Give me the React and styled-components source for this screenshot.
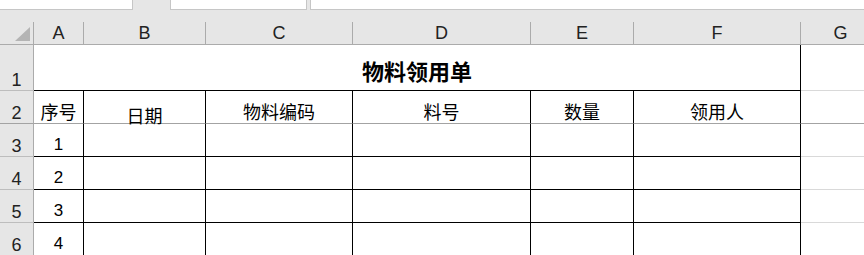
import React from "react";
import styled, { createGlobalStyle } from "styled-components";

const Global = createGlobalStyle`
  html, body { margin: 0; padding: 0; background: #ffffff; overflow: hidden; }
  #root { width: 864px; height: 255px; overflow: hidden; }
`;

const COLS = [
  { key: "A", w: 50 },
  { key: "B", w: 122 },
  { key: "C", w: 147 },
  { key: "D", w: 178 },
  { key: "E", w: 103 },
  { key: "F", w: 167 },
  { key: "G", w: 80 },
];
const ROW_H = [46, 33, 33, 33, 33, 33];

const BLACK = "#000000";
const GRID = "#d9d9d9";
const FREEZE = "#a3a3a3";
const HEAD_LINE = "#ababab";
const HEAD_BG = "#e6e6e6";

const Sheet = styled.div`
  display: flex;
  flex-direction: column;
  width: 864px;
  height: 255px;
  overflow: hidden;
  background: #ffffff;
`;

const FormulaBar = styled.div`
  display: flex;
  align-items: flex-start;
  height: 22px;
  background: ${HEAD_BG};
`;

const BarBox = styled.div`
  box-sizing: border-box;
  height: 10px;
  width: ${(p) => (p.$w ? `${p.$w}px` : "auto")};
  flex: ${(p) => (p.$grow ? 1 : "none")};
  margin-left: ${(p) => p.$gap || 0}px;
  background: #ffffff;
  border-bottom: 1px solid #c6c6c6;
  border-left: ${(p) => (p.$left ? "1px solid #c6c6c6" : "none")};
  border-right: ${(p) => (p.$right ? "1px solid #c6c6c6" : "none")};
`;

const Grid = styled.div`
  display: grid;
  grid-template-columns: 34px ${COLS.map((c) => `${c.w}px`).join(" ")};
  grid-template-rows: 23px ${ROW_H.map((h) => `${h}px`).join(" ")};
  width: 864px;
  overflow: hidden;
`;

const Corner = styled.div`
  position: relative;
  box-sizing: border-box;
  background: ${HEAD_BG};
  border-right: 1px solid ${HEAD_LINE};
  border-bottom: 1px solid ${HEAD_LINE};
`;

const CornerTriangle = styled.svg`
  position: absolute;
  left: 15px;
  top: 5px;
`;

const ColHead = styled.div`
  box-sizing: border-box;
  display: flex;
  align-items: flex-end;
  justify-content: center;
  padding-bottom: 1px;
  background: ${HEAD_BG};
  border-right: 1px solid ${HEAD_LINE};
  border-bottom: 1px solid ${HEAD_LINE};
  font-family: "Liberation Sans", Arial, sans-serif;
  font-size: 18px;
  line-height: 20px;
  color: #222222;
`;

const RowHead = styled.div`
  box-sizing: border-box;
  display: flex;
  align-items: flex-end;
  justify-content: center;
  padding-bottom: 0px;
  background: ${HEAD_BG};
  border-right: 1px solid ${HEAD_LINE};
  border-bottom: 1px solid ${(p) => p.$line};
  font-family: "Liberation Sans", Arial, sans-serif;
  font-size: 18px;
  line-height: 20px;
  color: #222222;
`;

const Cell = styled.div`
  box-sizing: border-box;
  display: flex;
  align-items: flex-end;
  justify-content: center;
  padding-bottom: ${(p) => p.$pad ?? 2}px;
  grid-column: ${(p) => (p.$span ? `span ${p.$span}` : "auto")};
  border-right: ${(p) => (p.$right ? `1px solid ${p.$right}` : "none")};
  border-bottom: 1px solid ${(p) => p.$bottom};
  font-family: ${(p) =>
    p.$num
      ? `"Liberation Sans", Arial, sans-serif`
      : `"Noto Sans CJK SC", "Noto Sans", sans-serif`};
  font-size: ${(p) => (p.$title ? 22 : p.$num ? 17 : 18)}px;
  font-weight: ${(p) => (p.$title ? 700 : 400)};
  line-height: ${(p) => p.$lh ?? (p.$title ? 28 : 20)}px;
  color: #000000;
  white-space: nowrap;
`;

const headers = [
  { text: "序号" },
  { text: "日期", pad: 0, lh: 16 },
  { text: "物料编码" },
  { text: "料号" },
  { text: "数量" },
  { text: "领用人" },
];

export default function App() {
  return (
    <>
      <Global />
      <Sheet>
        <FormulaBar>
          <BarBox $w={133} $right />
          <BarBox $w={137} $gap={37} $left $right />
          <BarBox $grow $gap={3} $left />
        </FormulaBar>
        <Grid>
          <Corner>
            <CornerTriangle width="16" height="15" viewBox="0 0 16 15">
              <polygon points="15,0 15,14 0,14" fill="#b4b4b4" />
            </CornerTriangle>
          </Corner>
          {COLS.map((c) => (
            <ColHead key={c.key}>{c.key}</ColHead>
          ))}

          {/* Row 1 */}
          <RowHead $line="#bdbdbd">1</RowHead>
          <Cell $span={6} $title $right={BLACK} $bottom={BLACK} $pad={6}>
            物料领用单
          </Cell>
          <Cell $bottom={GRID} />

          {/* Row 2 */}
          <RowHead $line={FREEZE}>2</RowHead>
          {headers.map((h) => (
            <Cell
              key={h.text}
              $right={BLACK}
              $bottom={FREEZE}
              $pad={h.pad ?? 2}
              $lh={h.lh}
            >
              {h.text}
            </Cell>
          ))}
          <Cell $bottom={FREEZE} />

          {/* Rows 3-6 */}
          {[1, 2, 3, 4].map((n) => (
            <React.Fragment key={n}>
              <RowHead $line="#bdbdbd">{n + 2}</RowHead>
              <Cell $num $right={BLACK} $bottom={BLACK} $pad={1}>
                {n}
              </Cell>
              {[0, 1, 2, 3, 4].map((i) => (
                <Cell key={i} $right={BLACK} $bottom={BLACK} />
              ))}
              <Cell $bottom={GRID} />
            </React.Fragment>
          ))}
        </Grid>
      </Sheet>
    </>
  );
}
